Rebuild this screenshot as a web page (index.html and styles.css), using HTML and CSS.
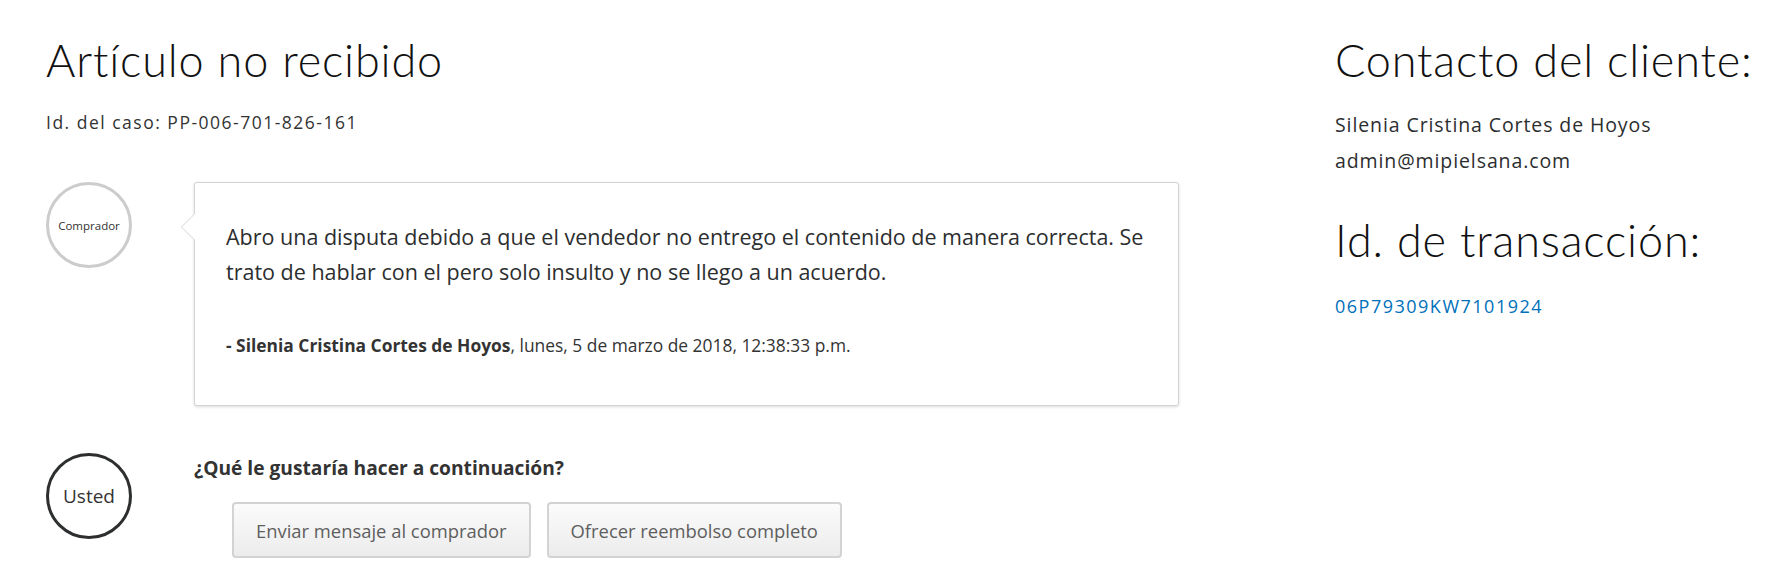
FILE: index.html
```html
<!DOCTYPE html>
<html lang="es">
<head>
    <meta charset="UTF-8">
    <meta name="viewport" content="width=device-width, initial-scale=1.0">
    <title>Artículo no recibido</title>
    <link rel="stylesheet" href="styles.css">
</head>
<body>
    <div class="page">
        <div class="case">
            <h1 class="title">Artículo no recibido</h1>
            <p class="case-id">Id. del caso: PP-006-701-826-161</p>

            <div class="thread-item">
                <div class="avatar buyer">Comprador</div>
                <div class="message">
                    <p class="message-text">Abro una disputa debido a que el vendedor no entrego el contenido de manera correcta. Se trato de hablar con el pero solo insulto y no se llego a un acuerdo.</p>
                    <p class="signature"><strong>- Silenia Cristina Cortes de Hoyos</strong>, lunes, 5 de marzo de 2018, 12:38:33 p.m.</p>
                </div>
            </div>

            <div class="thread-item next-step">
                <div class="avatar you">Usted</div>
                <div class="actions">
                    <p class="question">¿Qué le gustaría hacer a continuación?</p>
                    <div class="buttons">
                        <button class="btn">Enviar mensaje al comprador</button>
                        <button class="btn">Ofrecer reembolso completo</button>
                    </div>
                </div>
            </div>
        </div>

        <div class="sidebar">
            <h2 class="title">Contacto del cliente:</h2>
            <p class="side-line first">Silenia Cristina Cortes de Hoyos</p>
            <p class="side-line">admin@mipielsana.com</p>

            <h2 class="title second">Id. de transacción:</h2>
            <a class="txn-link" href="#">06P79309KW7101924</a>
        </div>
    </div>
</body>
</html>
```

FILE: styles.css
```css
body {
    margin: 0;
    padding: 32px 0 32px 46px;
    background: #fff;
    color: #2c2e2f;
    font-family: "Open Sans", sans-serif;
}

p {
    margin: 0;
}

.page {
    display: grid;
    grid-template-columns: 1133px 1fr;
    column-gap: 156px;
}

/* Headings */
.title {
    margin: 0;
    font-family: "Lato", sans-serif;
    font-size: 45px;
    font-weight: 300;
    line-height: 56px;
    letter-spacing: 0.85px;
    white-space: nowrap;
    color: #111;
}

.title.second {
    margin-top: 33px;
}

/* Left column */
.case-id {
    margin-top: 22px;
    font-size: 17.5px;
    line-height: 24px;
    letter-spacing: 1.5px;
    color: #333;
}

.thread-item {
    display: flex;
    align-items: flex-start;
    margin-top: 48px;
}

.avatar {
    flex: 0 0 auto;
    width: 80px;
    height: 80px;
    border-radius: 50%;
    display: flex;
    align-items: center;
    justify-content: center;
    color: #333;
}

.buyer {
    border: 3px solid #ccc;
    font-size: 11.5px;
}

.you {
    border: 3px solid #2c2e2f;
    font-size: 19px;
}

.message {
    position: relative;
    margin-left: 62px;
    width: 983px;
    height: 222px;
    border: 1px solid #d4d4d4;
    border-radius: 3px;
    box-shadow: 0 1px 3px rgba(0, 0, 0, 0.15);
    background: #fff;
}

.message::before,
.message::after {
    content: "";
    position: absolute;
    top: 30px;
    border-style: solid;
    border-width: 14px 14px 14px 0;
}

.message::before {
    left: -14px;
    border-color: transparent #d4d4d4 transparent transparent;
}

.message::after {
    left: -13px;
    border-color: transparent #fff transparent transparent;
}

.message-text {
    padding: 36px 31px 0;
    font-size: 21.5px;
    line-height: 35px;
    color: #2c2e2f;
}

.signature {
    padding: 44px 31px 0;
    font-size: 17.4px;
    line-height: 24px;
    color: #333;
}

.next-step {
    margin-top: 47px;
}

.actions {
    margin-left: 62px;
}

.question {
    margin-top: 2px;
    font-size: 19.2px;
    line-height: 26px;
    font-weight: bold;
    color: #333;
}

.buttons {
    display: flex;
    gap: 16px;
    margin-top: 21px;
    margin-left: 38px;
}

.btn {
    height: 56px;
    padding: 0 22px;
    border: 2px solid #d3d3d3;
    border-radius: 4px;
    background: linear-gradient(#fbfbfb, #ececec);
    font-family: "Open Sans", sans-serif;
    font-size: 18.4px;
    color: #5e5e5e;
    cursor: pointer;
}

/* Right column */
.side-line {
    font-size: 19.5px;
    line-height: 36px;
    letter-spacing: 0.9px;
    color: #2c2e2f;
}

.side-line.first {
    margin-top: 19px;
}

.txn-link {
    display: block;
    margin-top: 26px;
    font-size: 18px;
    line-height: 24px;
    letter-spacing: 1.5px;
    color: #0070ba;
    text-decoration: none;
}
```
